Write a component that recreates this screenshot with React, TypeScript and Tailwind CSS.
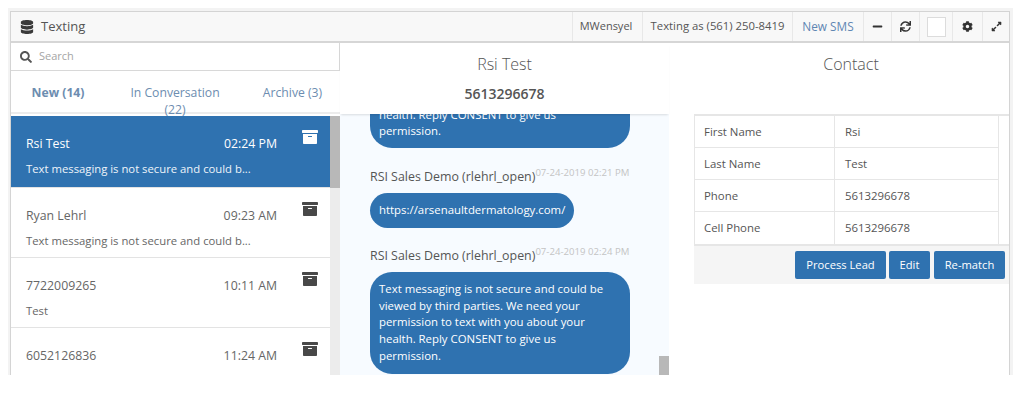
import { FaArchive, FaCog, FaDatabase, FaExpandAlt, FaMinus, FaSearch, FaSync } from 'react-icons/fa';

const conversations = [
  { name: 'Rsi Test', time: '02:24 PM', text: 'Text messaging is not secure and could b...', active: true },
  { name: 'Ryan Lehrl', time: '09:23 AM', text: 'Text messaging is not secure and could b...' },
  { name: '7722009265', time: '10:11 AM', text: 'Test' },
  { name: '6052126836', time: '11:24 AM', text: '' },
];

const contact = [
  ['First Name', 'Rsi'],
  ['Last Name', 'Test'],
  ['Phone', '5613296678'],
  ['Cell Phone', '5613296678'],
];

const consent =
  'Text messaging is not secure and could be viewed by third parties. We need your permission to text with you about your health. Reply CONSENT to give us permission.';

function MessageHead({ stamp }: { stamp: string }) {
  return (
    <div className="flex items-start h-[22px]">
      <span className="text-[12.4px] leading-[22px] text-[#555]">RSI Sales Demo (rlehrl_open)</span>
      <span className="text-[9.6px] leading-[14px] text-[#c4c4c4]">{stamp}</span>
    </div>
  );
}

export default function App() {
  return (
    <div className="h-[400px] w-[1024px] bg-white overflow-hidden pt-[8px] pl-[8px] font-['Open_Sans',sans-serif]">
      <div className="h-[367px] w-[1005px] bg-[#f3f3f3] pt-[3px] pl-[2px] pr-[3px]">
        <div className="h-[364px] border-x border-t border-[#d4d4d4] bg-white flex flex-col overflow-hidden">
          {/* Top bar */}
          <div className="h-[31px] shrink-0 flex items-center bg-[#f8f8f8] border-b-2 border-[#d6d6d6] text-[#555]">
            <div className="flex-1 flex items-center pl-[9px] gap-[7px]">
              <FaDatabase className="text-[14px] text-[#3a3a3a]" />
              <span className="text-[13px]">Texting</span>
            </div>
            <div className="w-[70px] h-full flex items-center justify-center pr-[3px] border-l border-[#e8e8e8] text-[11px]">MWensyel</div>
            <div className="w-[150px] h-full flex items-center justify-center border-l border-[#e8e8e8] text-[11.3px]">Texting as (561) 250-8419</div>
            <div className="w-[71px] h-full flex items-center justify-center border-l border-[#e8e8e8] text-[11.8px] text-[#5f86b3]">New SMS</div>
            <div className="w-[28px] h-full flex items-center justify-center border-l border-[#e8e8e8]"><FaMinus className="text-[11px] text-[#333]" /></div>
            <div className="w-[28px] h-full flex items-center justify-center border-l border-[#e8e8e8]"><FaSync className="text-[11px] text-[#333]" /></div>
            <div className="w-[33px] h-full flex items-center justify-center border-l border-[#e8e8e8]">
              <div className="w-[19px] h-[20px] bg-white border border-[#dcdcdc]" />
            </div>
            <div className="w-[30px] h-full flex items-center justify-center border-l border-[#e8e8e8]"><FaCog className="text-[11px] text-[#333]" /></div>
            <div className="w-[27px] h-full flex items-center justify-center border-l border-[#e8e8e8]"><FaExpandAlt className="text-[11px] text-[#333]" /></div>
          </div>

          <div className="flex flex-1 min-h-0">
            {/* Left column */}
            <div className="w-[329px] shrink-0 flex flex-col">
              <div className="h-[28px] shrink-0 flex items-center gap-[7px] pl-[9px] border-b border-r border-[#d8d8d8]">
                <FaSearch className="text-[12px] text-[#555]" />
                <span className="text-[11px] text-[#a5a5a5]">Search</span>
              </div>
              <div className="h-[43px] shrink-0 grid grid-cols-[94px_140px_95px] pt-[13px] text-center text-[12.2px] leading-[17px] text-[#6d8db0] border-b-2 border-[#ececec]">
                <span className="font-bold">New (14)</span>
                <span>In Conversation<br />(22)</span>
                <span>Archive (3)</span>
              </div>
              <div className="flex flex-1 min-h-0 pt-[2px] overflow-hidden">
                <div className="flex-1 min-w-0">
                  {conversations.map((c) => (
                    <div
                      key={c.name}
                      className={`relative h-[70px] first:h-[72px] pl-[15px] pr-[53px] pt-[20px] border-b border-[#e3e3e3] ${c.active ? 'bg-[#2f72b0] text-white' : 'text-[#666]'}`}
                    >
                      <div className="flex justify-between text-[12.3px] leading-[16px]">
                        <span>{c.name}</span>
                        <span>{c.time}</span>
                      </div>
                      <div className={`mt-[9px] text-[11.3px] leading-[16px] whitespace-nowrap ${c.active ? 'text-[#eef4fa]' : 'text-[#666]'}`}>{c.text}</div>
                      <FaArchive className={`absolute right-[12px] top-[13px] text-[16px] ${c.active ? 'text-white' : 'text-[#484848]'}`} />
                    </div>
                  ))}
                </div>
                <div className="w-[10px] shrink-0 bg-[#ececec]">
                  <div className="h-[72px] bg-[#b8b8b8]" />
                </div>
              </div>
            </div>

            {/* Conversation */}
            <div className="w-[329px] shrink-0 flex flex-col">
              <div className="relative z-10 h-[71px] shrink-0 bg-white text-center text-[#555] shadow-[0_2px_2px_-1px_rgba(0,0,0,0.12)]">
                <div className="pt-[10px] text-[16px] leading-[22px] font-light">Rsi Test</div>
                <div className="pt-[10px] text-[14px] leading-[18px] font-semibold">5613296678</div>
              </div>
              <div className="relative flex-1 min-h-0 bg-[#f7fbff] pl-[30px] overflow-hidden">
                <div className="w-[260px] h-[34px] rounded-b-[22px] bg-[#2f72b0] px-[9px] text-[11.4px] leading-[16.7px] text-white flex items-end pb-[8px]">
                  <span className="whitespace-nowrap">health. Reply CONSENT to give us<br />permission.</span>
                </div>
                <div className="mt-[18px]"><MessageHead stamp="07-24-2019 02:21 PM" /></div>
                <div className="mt-[5px] w-fit h-[35px] rounded-[18px] bg-[#2f72b0] px-[9px] text-[11.4px] leading-[34px] text-white">https://arsenaultdermatology.com/</div>
                <div className="mt-[17px]"><MessageHead stamp="07-24-2019 02:24 PM" /></div>
                <div className="mt-[5px] w-[260px] rounded-[22px] bg-[#2f72b0] pl-[9px] pr-[14px] pt-[9px] pb-[9px] text-[11.4px] leading-[16.7px] text-white">{consent}</div>
                <div className="absolute right-0 bottom-0 w-[10px] h-[19px] bg-[#b8b8b8]" />
              </div>
            </div>

            {/* Contact */}
            <div className="flex-1 min-w-0 flex flex-col">
              <div className="h-[71px] shrink-0 pt-[10px] pl-[24px] text-center text-[16px] leading-[22px] font-light text-[#555]">Contact</div>
              <div className="pl-[25px]">
                <div className="border-t-2 border-b-2 border-[#e6e6e6]">
                  <div className="w-[305px] border-x border-[#e6e6e6]">
                    {contact.map(([label, value]) => (
                      <div key={label} className="grid grid-cols-[140px_1fr] h-[32px] border-b last:border-b-0 border-[#e6e6e6] text-[11.4px] leading-[31px] text-[#555]">
                        <span className="pl-[9px] border-r border-[#e6e6e6]">{label}</span>
                        <span className="pl-[10px]">{value}</span>
                      </div>
                    ))}
                  </div>
                </div>
                <div className="h-[38px] flex items-start justify-end gap-[3px] bg-[#f5f5f5] pt-[5px] pr-[4px] text-[11.2px] text-white">
                  <button className="w-[91px] h-[28px] rounded-[2px] bg-[#2f72b0]">Process Lead</button>
                  <button className="w-[41px] h-[28px] mr-[1px] rounded-[2px] bg-[#2f72b0]">Edit</button>
                  <button className="w-[71px] h-[28px] rounded-[2px] bg-[#2f72b0]">Re-match</button>
                </div>
              </div>
            </div>
          </div>
        </div>
      </div>
    </div>
  );
}
